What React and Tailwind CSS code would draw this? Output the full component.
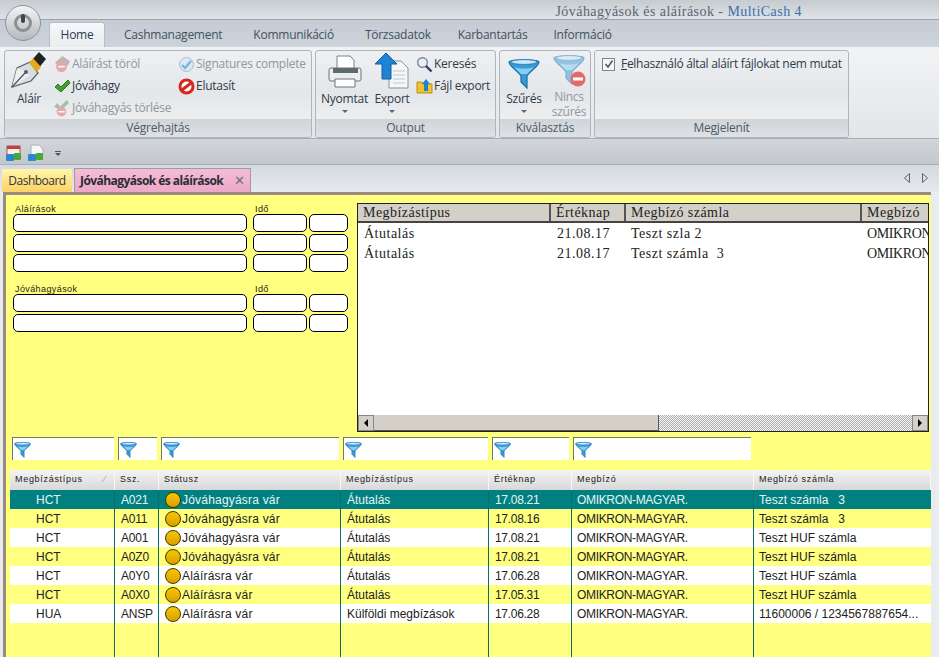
import React from "react";

const sans = "font-['Open_Sans','Noto_Sans',sans-serif]";

function Funnel({ size = 16, muted = false }) {
  return (
    <svg width={size} height={size} viewBox="0 0 32 32" className={muted ? "opacity-50" : ""}>
      <path d="M1 5 C1 2 31 2 31 5 C31 9 21 15 19 19 L19 31 L13 25 L13 19 C11 15 1 9 1 5 Z" fill="#3a9ad6" stroke="#1b6fa8" strokeWidth="1.2" />
      <ellipse cx="16" cy="5" rx="13" ry="2.4" fill="#cbe9fa" stroke="#1b6fa8" strokeWidth="0.8" />
      <path d="M6 10 C12 12 20 12 26 10 L19 17 L13 17 Z" fill="#86cdf2" />
    </svg>
  );
}

function NibIcon() {
  return (
    <svg width="36" height="38" viewBox="0 0 36 38">
      <path d="M1 36 L6 17 L19 11 L27 22 L20 30 Z" fill="#d8dde2" stroke="#58636b" strokeWidth="1.3" />
      <path d="M6 17 L19 24 L1 36 Z" fill="#eef1f3" />
      <path d="M1 36 L14 22" stroke="#4a545c" strokeWidth="1.2" />
      <circle cx="15" cy="21" r="2" fill="#56616a" />
      <path d="M21 9 L28 1 L35 8 L27 18 Z" fill="#1f2226" />
      <path d="M18 12 L22 7 L30 16 L26 21 Z" fill="#e8a91f" />
    </svg>
  );
}

function Check({ muted }) {
  return (
    <svg width="17" height="15" viewBox="0 0 17 15" className={muted ? "opacity-50" : ""}>
      <path d="M1 8 L4 5 L7 8 L14 1 L16 4 L7 13 Z" fill="#42a12e" stroke="#2b7a1e" strokeWidth="1" />
    </svg>
  );
}

function NoEntry() {
  return (
    <svg width="17" height="17" viewBox="0 0 17 17">
      <circle cx="8.5" cy="8.5" r="6.5" fill="#fff" stroke="#d6281f" strokeWidth="3" />
      <path d="M4 12 L13 5" stroke="#d6281f" strokeWidth="3" />
    </svg>
  );
}

function SignDel() {
  return (
    <svg width="18" height="18" viewBox="0 0 17 17" className="opacity-70">
      <path d="M9 1 L16 6 L14 10 L4 10 L2 7 Z" fill="#a9a099" />
      <circle cx="8" cy="11" r="5" fill="#e58c8c" />
      <path d="M5 11 L11 11" stroke="#fff" strokeWidth="1.5" />
    </svg>
  );
}

function CheckDel() {
  return (
    <svg width="18" height="18" viewBox="0 0 17 17" className="opacity-70">
      <path d="M1 7 L4 4 L7 7 L13 1 L15 4 L7 11 Z" fill="#8fae84" />
      <circle cx="8" cy="12" r="4.5" fill="#e58c8c" />
      <path d="M5 12 L11 12" stroke="#fff" strokeWidth="1.5" />
    </svg>
  );
}

function RoundCheck() {
  return (
    <svg width="17" height="17" viewBox="0 0 17 17">
      <circle cx="8.5" cy="8.5" r="7" fill="#dbe9f2" stroke="#a7bcc9" />
      <path d="M4 9 L7 12 L13 5" fill="none" stroke="#79b6dc" strokeWidth="2.4" />
    </svg>
  );
}

function Printer() {
  return (
    <svg width="34" height="34" viewBox="0 0 34 34">
      <path d="M9 1 L22 1 L26 5 L26 14 L9 14 Z" fill="#fff" stroke="#7b8288" />
      <rect x="1" y="13" width="32" height="13" rx="2" fill="#eceeef" stroke="#6e757b" />
      <rect x="5" y="13" width="25" height="5" fill="#5f6a70" />
      <path d="M7 24 L27 24 L27 32 L7 32 Z" fill="#fff" stroke="#6e757b" />
    </svg>
  );
}

function ExportIcon() {
  return (
    <svg width="34" height="36" viewBox="0 0 34 36">
      <path d="M14 8 L26 8 L33 15 L33 35 L14 35 Z" fill="#f4f6f8" stroke="#8b9298" />
      <path d="M18 18 H30 M18 22 H30 M18 26 H30 M18 30 H30" stroke="#c3c8cc" />
      <path d="M11 0 L22 11 L16 11 L16 26 L7 26 L7 11 L0 11 Z" fill="#1f83d4" stroke="#135f9f" />
    </svg>
  );
}

function Search() {
  return (
    <svg width="17" height="17" viewBox="0 0 17 17">
      <circle cx="6.5" cy="6.5" r="4.8" fill="#e8f1f8" stroke="#7d8a94" strokeWidth="1.4" />
      <path d="M10 10 L15.5 15.5" stroke="#2d3a6b" strokeWidth="2.4" />
    </svg>
  );
}

function FileExport() {
  return (
    <svg width="17" height="17" viewBox="0 0 17 17">
      <path d="M1 4 L6 4 L7 6 L16 6 L16 15 L1 15 Z" fill="#f2c230" stroke="#b98d17" />
      <path d="M10 1 L14 6 L12 6 L12 13 L8 13 L8 6 L6 6 Z" fill="#1f83d4" />
    </svg>
  );
}

function NoFilter() {
  return (
    <div className="relative h-[34px] w-[32px]">
      <Funnel size={32} muted />
      <svg width="16" height="16" viewBox="0 0 16 16" className="absolute -right-[1px] bottom-0">
        <circle cx="8" cy="8" r="7.5" fill="#e5696b" />
        <rect x="3" y="6.5" width="10" height="3" fill="#fff" />
      </svg>
    </div>
  );
}

function SmallCal({ page }) {
  return (
    <svg width="17" height="18" viewBox="0 0 17 18">
      {page ? (
        <path d="M4 1 L12 1 L16 5 L16 11 L4 11 Z" fill="#f4f6f8" stroke="#a8b0b6" />
      ) : (
        <g>
          <rect x="2" y="2" width="13" height="10" fill="#f6f1e7" stroke="#a55" />
          <rect x="2" y="2" width="13" height="3" fill="#c43c3c" />
        </g>
      )}
      <rect x="1" y="10" width="8" height="7" rx="1" fill="#2c86c9" />
      <rect x="9" y="9" width="7" height="7" rx="1" fill="#4aa53b" />
    </svg>
  );
}

function Small({ icon, label, muted }) {
  return (
    <div className={`flex items-center h-[22px] gap-px text-[12px] tracking-[-0.25px] ${muted ? "text-[#90979e]" : "text-[#2f3b47]"}`}>
      <span className="w-[18px] flex justify-center shrink-0">{icon}</span>
      <span className="whitespace-nowrap">{label}</span>
    </div>
  );
}

function Group({ title, className, children }) {
  return (
    <div className={`flex flex-col h-[88px] rounded-[3px] border border-[#aeb5bb] bg-gradient-to-b from-[#eef0f3] via-[#e4e7ea] to-[#f2f3f4] ${className}`}>
      <div className="flex-1 min-h-0 relative">{children}</div>
      <div className="h-[18px] text-center text-[12px] leading-[17px] tracking-[-0.2px] text-[#4f5a64] bg-gradient-to-b from-[#cfd4d9] to-[#dfe2e5] rounded-b-[3px]">{title}</div>
    </div>
  );
}

function Big({ icon, label, arrow, muted, className }) {
  return (
    <div className={`flex flex-col items-center text-[12px] leading-[15px] tracking-[-0.25px] ${muted ? "text-[#90979e]" : "text-[#2f3b47]"} ${className || ""}`}>
      <div className="h-[37px] flex items-end">{icon}</div>
      <div className="mt-[2px] text-center whitespace-pre-line">{label}</div>
      {arrow && <div className="mt-[4px] w-0 h-0 border-x-[3px] border-x-transparent border-t-[3px] border-t-[#5b6670]" />}
    </div>
  );
}

function Box({ className }) {
  return <div className={`h-[18px] bg-white border-[1.5px] border-black rounded-[5px] ${className}`} />;
}

function SlotRow() {
  return (
    <div className="flex gap-[6px]">
      <Box className="w-[234px]" />
      <div className="flex gap-[2px]">
        <Box className="w-[54px]" />
        <Box className="w-[39px]" />
      </div>
    </div>
  );
}

const listCols = "grid-cols-[193px_75px_236px_68px]";

const listRows = [
  ["Átutalás", "21.08.17", "Teszt szla 2", "OMIKRON"],
  ["Átutalás", "21.08.17", "Teszt számla  3", "OMIKRON"],
];

const gridCols = "grid-cols-[105px_44px_182px_148px_83px_182px_1fr]";

const headers = ["Megbízástípus", "Ssz.", "Státusz", "Megbízástípus", "Értéknap", "Megbízó", "Megbízó számla"];

const rows = [
  ["HCT", "A021", "Jóváhagyásra vár", "Átutalás", "17.08.21", "OMIKRON-MAGYAR.", "Teszt számla   3"],
  ["HCT", "A011", "Jóváhagyásra vár", "Átutalás", "17.08.16", "OMIKRON-MAGYAR.", "Teszt számla   3"],
  ["HCT", "A001", "Jóváhagyásra vár", "Átutalás", "17.08.21", "OMIKRON-MAGYAR.", "Teszt HUF számla"],
  ["HCT", "A0Z0", "Jóváhagyásra vár", "Átutalás", "17.08.21", "OMIKRON-MAGYAR.", "Teszt HUF számla"],
  ["HCT", "A0Y0", "Aláírásra vár", "Átutalás", "17.06.28", "OMIKRON-MAGYAR.", "Teszt HUF számla"],
  ["HCT", "A0X0", "Aláírásra vár", "Átutalás", "17.05.31", "OMIKRON-MAGYAR.", "Teszt HUF számla"],
  ["HUA", "ANSP", "Aláírásra vár", "Külföldi megbízások", "17.06.28", "OMIKRON-MAGYAR.", "11600006 / 1234567887654..."],
];

const cellClasses = [
  "pl-[26px]",
  "pl-[6px] tracking-[-0.2px]",
  "pl-[6px] flex items-center tracking-[0.2px]",
  "pl-[6px]",
  "pl-[6px] tracking-[-0.3px]",
  "pl-[5px] tracking-[-0.33px]",
  "pl-[5px]",
];

const filterWidths = ["w-[102px]", "w-[39px]", "w-[178px]", "w-[145px]", "w-[77px]", "w-[178px]"];

function Row({ row, index }) {
  const bg = index === 0 ? "bg-[#008080] text-[#e8f5f5]" : index % 2 === 1 ? "bg-[#ffff80] text-[#222]" : "bg-white text-[#222]";
  return (
    <div className={`grid ${gridCols} h-[19px] leading-[20px] text-[12px] ${bg}`}>
      {row.map((cell, i) => (
        <div key={i} className={`whitespace-pre overflow-hidden ${i < 6 ? "border-r border-[#0f6a6a]" : ""} ${cellClasses[i]}`}>
          {i === 2 && (
            <span className="inline-block w-[16px] h-[16px] mr-px rounded-full border-[1.5px] border-[#3f3500] bg-gradient-to-b from-[#f6c800] to-[#d99f00] shrink-0" />
          )}
          {cell}
        </div>
      ))}
    </div>
  );
}

export default function App() {
  return (
    <div className={`w-[939px] h-[657px] overflow-hidden flex flex-col bg-[#d5dae0] ${sans}`}>
      {/* title bar */}
      <div className="h-[19px] shrink-0 flex justify-end pr-[137px] pt-[3px] items-center bg-gradient-to-b from-[#c6cbd0] to-[#dfe3e6] font-['Liberation_Serif',serif] text-[14px] text-[#5a6570] tracking-[0.45px] whitespace-pre">
        Jóváhagyások és aláírások - <span className="text-[#3d6fa8]">MultiCash 4</span>
      </div>

      {/* tab strip */}
      <div className="relative h-[28px] shrink-0 flex items-end pl-[49px] bg-gradient-to-b from-[#c5ccd5] to-[#cdd3da] border-t border-[#9aa2aa] text-[12px] tracking-[-0.25px] text-[#44505c]">
        <div className="absolute left-[5px] top-[-15px] w-[36px] h-[36px] rounded-full border border-[#8d959c] bg-gradient-to-b from-[#f3f4f5] to-[#b5b9bd] flex items-center justify-center">
          <div className="w-[18px] h-[18px] rounded-full border-[3px] border-[#8a8f94] flex justify-center">
            <div className="w-[4px] h-[9px] -mt-[3px] bg-[#3f4347] rounded-sm" />
          </div>
        </div>
        <div className="w-[56px] h-[25px] flex items-center justify-center rounded-t-[3px] border border-b-0 border-[#b7bdc4] bg-gradient-to-b from-[#f6f8fa] to-[#e9edf0] text-[#2f3b47]">Home</div>
        <div className="flex h-[25px] items-center ml-[19px] whitespace-nowrap">
          <span>Cashmanagement</span>
          <span className="ml-[31px]">Kommunikáció</span>
          <span className="ml-[31px]">Törzsadatok</span>
          <span className="ml-[27px]">Karbantartás</span>
          <span className="ml-[26px]">Információ</span>
        </div>
      </div>

      {/* ribbon */}
      <div className="h-[92px] shrink-0 flex gap-[3px] pl-[4px] pt-[3px] bg-gradient-to-b from-[#f1f3f5] to-[#e3e6e9] border-b border-[#a7adb3]">
        <Group title="Végrehajtás" className="w-[308px]">
          <div className="flex h-full">
            <Big icon={<NibIcon />} label="Aláír" className="w-[45px] pl-[3px] pt-[1px]" />
            <div className="pl-[3px] pt-[2px] w-[127px]">
              <Small icon={<SignDel />} label="Aláírást töröl" muted />
              <Small icon={<Check />} label="Jóváhagy" />
              <Small icon={<CheckDel />} label="Jóváhagyás törlése" muted />
            </div>
            <div className="pt-[2px]">
              <Small icon={<RoundCheck />} label="Signatures complete" muted />
              <Small icon={<NoEntry />} label="Elutasít" />
            </div>
          </div>
        </Group>
        <Group title="Output" className="w-[181px]">
          <div className="flex h-full">
            <Big icon={<Printer />} label="Nyomtat" arrow className="w-[53px] pl-[4px] pt-[1px]" />
            <Big icon={<ExportIcon />} label="Export" arrow className="w-[44px] pl-[2px] pt-[1px]" />
            <div className="pt-[2px] pl-[2px]">
              <Small icon={<Search />} label="Keresés" />
              <Small icon={<FileExport />} label="Fájl export" />
            </div>
          </div>
        </Group>
        <Group title="Kiválasztás" className="w-[92px]">
          <div className="flex h-full">
            <Big icon={<Funnel size={32} />} label="Szűrés" arrow className="w-[48px] pt-[1px]" />
            <Big icon={<NoFilter />} label={"Nincs\nszűrés"} muted className="w-[42px] pt-[1px]" />
          </div>
        </Group>
        <Group title="Megjelenít" className="w-[255px]">
          <div className="flex items-center h-[22px] mt-[2px] pl-[7px] gap-[6px] text-[12px] tracking-[-0.3px] text-[#2f3b47] whitespace-nowrap">
            <span className="w-[13px] h-[13px] border border-[#7b848c] bg-[#f4f6f7] flex items-center justify-center">
              <svg width="10" height="10" viewBox="0 0 10 10">
                <path d="M1.5 5 L4 8 L8.5 1.5" fill="none" stroke="#4a5560" strokeWidth="1.5" />
              </svg>
            </span>
            <span><u>F</u>elhasználó által aláírt fájlokat nem mutat</span>
          </div>
        </Group>
      </div>

      {/* quick access */}
      <div className="h-[26px] shrink-0 flex items-center pt-[3px] pl-[5px] gap-[5px] bg-gradient-to-b from-[#d2d6da] to-[#c3c8cc] border-b border-[#a8aeb4]">
        <SmallCal />
        <SmallCal page />
        <div className="ml-[6px] flex flex-col items-center gap-px">
          <div className="w-[6px] h-px bg-[#555]" />
          <div className="w-0 h-0 border-x-[3px] border-x-transparent border-t-[3px] border-t-[#555]" />
        </div>
      </div>

      {/* document tabs */}
      <div className="h-[27px] shrink-0 flex items-end pl-[2px] gap-[2px] bg-gradient-to-b from-[#d4d9e0] to-[#e6e9ee] text-[12px] relative">
        <div className="w-[70px] h-[23px] flex items-center justify-center rounded-t-[2px] bg-gradient-to-b from-[#fff6a8] to-[#fdd267] text-[#333] tracking-[-0.5px]">Dashboard</div>
        <div className="w-[177px] h-[24px] flex items-center justify-between pl-[5px] pr-[6px] border border-b-0 border-[#a09aa0] bg-gradient-to-b from-[#f3bdd6] to-[#eca9c7] font-bold text-[#2c2c34] text-[12px] whitespace-nowrap tracking-[-0.55px]">
          Jóváhagyások és aláírások
          <span className="text-[#66707a] text-[13px] font-normal">✕</span>
        </div>
        <div className="absolute right-[11px] top-[8px] flex gap-[12px]">
          <svg width="6" height="10" viewBox="0 0 6 10">
            <path d="M5.5 0.5 L0.5 5 L5.5 9.5 Z" fill="none" stroke="#5a646e" />
          </svg>
          <svg width="6" height="10" viewBox="0 0 6 10">
            <path d="M0.5 0.5 L5.5 5 L0.5 9.5 Z" fill="none" stroke="#5a646e" />
          </svg>
        </div>
      </div>

      {/* content */}
      <div className="flex-1 min-h-0 flex pl-[3px] pr-[8px] bg-[#e9ecef]">
        <div className="flex-1 flex flex-col min-w-0 bg-[#ffff80] border-l-[3px] border-t-[3px] border-[#9c8a80] font-['Liberation_Sans',sans-serif]">
          {/* top part */}
          <div className="h-[242px] shrink-0 flex pt-[8px] pl-[7px]">
            <div className="w-[344px] shrink-0 text-[9px] tracking-[0.4px] text-[#222]">
              <div className="flex h-[11px] leading-[13px] pl-[2px]">
                <span className="w-[240px]">Aláírások</span>
                <span>Idő</span>
              </div>
              <div className="flex flex-col gap-[2px]">
                <SlotRow />
                <SlotRow />
                <SlotRow />
              </div>
              <div className="flex h-[11px] leading-[13px] pl-[2px] mt-[11px]">
                <span className="w-[240px]">Jóváhagyások</span>
                <span>Idő</span>
              </div>
              <div className="flex flex-col gap-[2px]">
                <SlotRow />
                <SlotRow />
              </div>
            </div>
            <div className="w-[572px] h-[229px] flex flex-col bg-white border-[1.5px] border-[#222] overflow-hidden font-['Liberation_Serif',serif] text-[14px] text-[#222]">
              <div className={`grid ${listCols} h-[19px] shrink-0 leading-[18px] tracking-[0.45px] bg-[#d4d0c8] border-b-2 border-[#444]`}>
                {["Megbízástípus", "Értéknap", "Megbízó számla", "Megbízó"].map((h, i) => (
                  <div key={h} className={`pl-[5px] whitespace-nowrap overflow-hidden ${i < 3 ? "border-r-2 border-[#555]" : ""}`}>{h}</div>
                ))}
              </div>
              <div className="flex-1 pt-[1px] tracking-[0.5px]">
                {listRows.map((r, i) => (
                  <div key={i} className={`grid ${listCols} h-[20px] leading-[20px]`}>
                    {r.map((c, j) => (
                      <div key={j} className={`whitespace-pre overflow-hidden ${j === 3 ? "pl-[5px] tracking-[-0.4px]" : j === 2 ? "pl-[5px]" : "pl-[6px]"}`}>{c}</div>
                    ))}
                  </div>
                ))}
              </div>
              <div className="h-[16px] shrink-0 flex bg-[#e8e4dc]">
                <div className="w-[16px] bg-[#d4d0c8] border border-[#888] flex items-center justify-center">
                  <div className="w-0 h-0 border-y-[4px] border-y-transparent border-r-[4px] border-r-black" />
                </div>
                <div className="w-[285px] bg-[#d4d0c8] border-b border-r border-[#555]" />
                <div className="flex-1 bg-[repeating-conic-gradient(#b0b0b0_0_25%,#f4f4f4_0_50%)] bg-[length:2px_2px]" />
                <div className="w-[16px] bg-[#d4d0c8] border border-[#888] flex items-center justify-center">
                  <div className="w-0 h-0 border-y-[4px] border-y-transparent border-l-[4px] border-l-black" />
                </div>
              </div>
            </div>
          </div>

          {/* filter row */}
          <div className="h-[23px] shrink-0 flex gap-[4px] pl-[6px]">
            {filterWidths.map((w, i) => (
              <div key={i} className={`${w} h-[23px] bg-white border-l border-t border-[#6b7a6b] pl-px pt-[3px]`}>
                <Funnel size={17} />
              </div>
            ))}
          </div>

          {/* grid */}
          <div className="flex-1 min-h-0 flex flex-col ml-[4px] mt-[10px] overflow-hidden">
            <div className={`grid ${gridCols} h-[20px] shrink-0 leading-[19px] text-[9px] tracking-[0.7px] text-[#222] bg-gradient-to-b from-[#f4f4f4] to-[#d8d8d8]`}>
              {headers.map((h, i) => (
                <div key={i} className="relative pl-[5px] border-r border-[#f8f8f8]">
                  {h}
                  {i === 0 && <span className="absolute right-[8px] top-0 text-[#999]">⁄</span>}
                </div>
              ))}
            </div>
            {rows.map((r, i) => (
              <Row key={i} row={r} index={i} />
            ))}
            <div className={`grid ${gridCols} flex-1`}>
              {headers.map((h, i) => (
                <div key={i} className={i < 6 ? "border-r border-[#0f6a6a]" : ""} />
              ))}
            </div>
          </div>
        </div>
      </div>
    </div>
  );
}
